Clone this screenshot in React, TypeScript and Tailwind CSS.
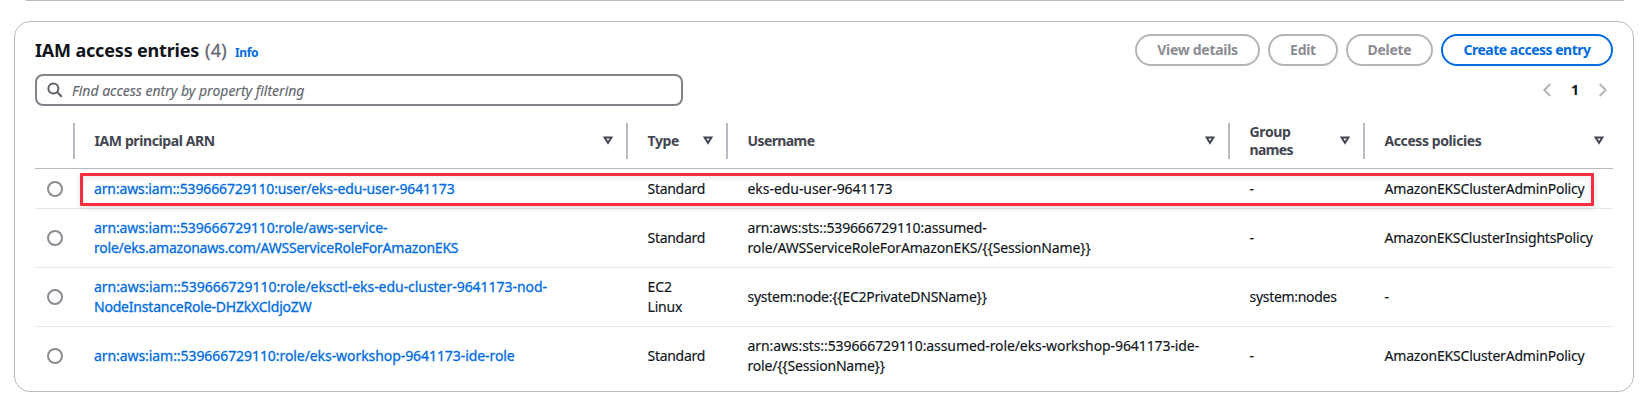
import type { ReactNode } from "react";

type Line = { text: string; spacing: string };

type Entry = {
  arn: Line[];
  type: Line[];
  username: Line[];
  groups: Line[];
  policies: Line[];
  height: string;
};

const dash: Line[] = [{ text: "-", spacing: "tracking-normal" }];
const standard: Line[] = [{ text: "Standard", spacing: "tracking-[-0.29px]" }];
const adminPolicy: Line[] = [
  { text: "AmazonEKSClusterAdminPolicy", spacing: "tracking-[-0.193px]" },
];

const entries: Entry[] = [
  {
    arn: [{ text: "arn:aws:iam::539666729110:user/eks-edu-user-9641173", spacing: "tracking-[-0.134px]" }],
    type: standard,
    username: [{ text: "eks-edu-user-9641173", spacing: "tracking-[-0.05px]" }],
    groups: dash,
    policies: adminPolicy,
    height: "h-10 border-b",
  },
  {
    arn: [
      { text: "arn:aws:iam::539666729110:role/aws-service-", spacing: "tracking-[-0.115px]" },
      { text: "role/eks.amazonaws.com/AWSServiceRoleForAmazonEKS", spacing: "tracking-[-0.23px]" },
    ],
    type: standard,
    username: [
      { text: "arn:aws:sts::539666729110:assumed-", spacing: "tracking-[-0.18px]" },
      { text: "role/AWSServiceRoleForAmazonEKS/{{SessionName}}", spacing: "tracking-[-0.15px]" },
    ],
    groups: dash,
    policies: [{ text: "AmazonEKSClusterInsightsPolicy", spacing: "tracking-[-0.225px]" }],
    height: "h-[59px] border-b",
  },
  {
    arn: [
      { text: "arn:aws:iam::539666729110:role/eksctl-eks-edu-cluster-9641173-nod-", spacing: "tracking-[-0.045px]" },
      { text: "NodeInstanceRole-DHZkXCldjoZW", spacing: "tracking-[-0.2px]" },
    ],
    type: [
      { text: "EC2", spacing: "tracking-[-0.1px]" },
      { text: "Linux", spacing: "tracking-[-0.2px]" },
    ],
    username: [{ text: "system:node:{{EC2PrivateDNSName}}", spacing: "tracking-[-0.25px]" }],
    groups: [{ text: "system:nodes", spacing: "tracking-[-0.3px]" }],
    policies: dash,
    height: "h-[59px] border-b",
  },
  {
    arn: [{ text: "arn:aws:iam::539666729110:role/eks-workshop-9641173-ide-role", spacing: "tracking-[-0.07px]" }],
    type: standard,
    username: [
      { text: "arn:aws:sts::539666729110:assumed-role/eks-workshop-9641173-ide-", spacing: "tracking-[-0.09px]" },
      { text: "role/{{SessionName}}", spacing: "tracking-[-0.19px]" },
    ],
    groups: dash,
    policies: adminPolicy,
    height: "h-[58px]",
  },
];

const columns: Line[][] = [
  [{ text: "IAM principal ARN", spacing: "tracking-[-0.4px]" }],
  [{ text: "Type", spacing: "tracking-[-0.4px]" }],
  [{ text: "Username", spacing: "tracking-[-0.6px]" }],
  [
    { text: "Group", spacing: "tracking-[-0.36px]" },
    { text: "names", spacing: "tracking-[-0.6px]" },
  ],
  [{ text: "Access policies", spacing: "tracking-[-0.41px]" }],
];

const grid = "grid grid-cols-[40px_553px_100px_502px_135px_248px] items-center";

function Lines({ lines }: { lines: Line[] }) {
  return (
    <>
      {lines.map((line) => (
        <div key={line.text} className={`whitespace-nowrap ${line.spacing}`}>
          {line.text}
        </div>
      ))}
    </>
  );
}

function Cell({ children, link }: { children: ReactNode; link?: boolean }) {
  return (
    <div
      className={
        link
          ? "pl-[19px] text-[#006ce0] [-webkit-text-stroke:0.3px_#006ce0]"
          : "pl-[19.5px] text-[#0f141a] [-webkit-text-stroke:0.15px_#0f141a]"
      }
    >
      {children}
    </div>
  );
}

function Button({ children, width, primary }: { children: ReactNode; width: string; primary?: boolean }) {
  return (
    <button
      className={`flex h-8 items-center justify-center whitespace-nowrap rounded-full border-2 text-sm font-bold ${width} ${
        primary
          ? "border-[#006ce0] text-[#006ce0] tracking-[-0.49px]"
          : "border-[#b4b4bb] text-[#8c8c94] tracking-[-0.28px]"
      }`}
    >
      {children}
    </button>
  );
}

function SortIcon() {
  return (
    <svg viewBox="0 0 10 9" className="h-[9px] w-[10px]" fill="none" stroke="#424650" strokeWidth="2">
      <path d="M1.6 1.5h6.8L5 6.8z" />
    </svg>
  );
}

function Chevron({ left }: { left?: boolean }) {
  return (
    <svg viewBox="0 0 8 14" className="h-[14px] w-2" fill="none" stroke="#b4b4bb" strokeWidth="2">
      <path d={left ? "M7.3 1 1.4 7l5.9 6" : "M.7 1l5.9 6-5.9 6"} />
    </svg>
  );
}

export default function App() {
  return (
    <div className="h-[401px] w-[1650px] overflow-hidden bg-white font-['Noto_Sans','Open_Sans',sans-serif] text-sm">
      <div className="mx-[26px] h-px bg-[#b9b9c4]" />
      <section className="mt-5 mr-4 ml-[14px] h-[371px] rounded-2xl border border-[#b9b9c4] px-5 pt-3">
        <header className="flex h-8 items-center justify-between">
          <div className="flex items-baseline whitespace-nowrap">
            <h2 className="w-[170px] text-lg leading-[22px] font-bold tracking-[-0.18px] text-[#0f141a]">
              IAM access entries
            </h2>
            <span className="w-[30px] text-lg leading-[22px] tracking-[0.3px] text-[#656871] [-webkit-text-stroke:0.3px_#656871]">
              (4)
            </span>
            <a className="text-xs font-bold tracking-[-0.35px] text-[#006ce0]">Info</a>
          </div>
          <div className="flex gap-2">
            <Button width="w-[125px]">View details</Button>
            <Button width="w-[70px]">Edit</Button>
            <Button width="w-[87px]">Delete</Button>
            <Button width="w-[172px]" primary>
              Create access entry
            </Button>
          </div>
        </header>

        <div className="mt-2 flex items-center justify-between">
          <div className="flex h-8 w-[648px] items-center rounded-lg border-2 border-[#82828a] pl-[10px]">
            <svg viewBox="0 0 16 16" className="h-4 w-4" fill="none" stroke="#5f626b" strokeWidth="2">
              <circle cx="6.4" cy="6.4" r="5" />
              <path d="M10 10l4.8 4.8" />
            </svg>
            <span className="ml-[9px] pt-[2px] whitespace-nowrap text-[#656871] italic [-webkit-text-stroke:0.15px_#656871]">
              Find access entry by property filtering
            </span>
          </div>
          <div className="mr-[6px] flex items-center">
            <Chevron left />
            <span className="w-12 text-center font-bold text-[#0f141a]">1</span>
            <Chevron />
          </div>
        </div>

        <div className="mt-[7px]">
          <div className={`${grid} h-14 border-b border-[#b9b9c4] leading-[18px] font-bold text-[#424650]`}>
            <div className="h-9 border-r-2 border-[#b9b9c4]" />
            {columns.map((lines, i) => (
              <div
                key={lines[0].text}
                className={`flex h-9 items-center justify-between pl-[19.5px] ${
                  i < columns.length - 1 ? "border-r-2 border-[#b9b9c4] pr-[13px]" : "pr-[9px]"
                }`}
              >
                <div>
                  <Lines lines={lines} />
                </div>
                <SortIcon />
              </div>
            ))}
          </div>

          <div className="relative">
            {entries.map((entry) => (
              <div key={entry.arn[0].text} className={`${grid} ${entry.height} border-[#e6e6ea] leading-5`}>
                <div className="ml-3 h-4 w-4 rounded-full border-2 border-[#8c8c94]" />
                <Cell link>
                  <Lines lines={entry.arn} />
                </Cell>
                <Cell>
                  <Lines lines={entry.type} />
                </Cell>
                <Cell>
                  <Lines lines={entry.username} />
                </Cell>
                <Cell>
                  <Lines lines={entry.groups} />
                </Cell>
                <Cell>
                  <Lines lines={entry.policies} />
                </Cell>
              </div>
            ))}
            <div className="absolute top-1 left-[45px] h-[33px] w-[1514px] rounded-[1px] border-3 border-[#fb2c3f] shadow-[0_2px_6px_rgba(0,0,0,0.12),inset_0_2px_6px_rgba(0,0,0,0.08)]" />
          </div>
        </div>
      </section>
    </div>
  );
}
